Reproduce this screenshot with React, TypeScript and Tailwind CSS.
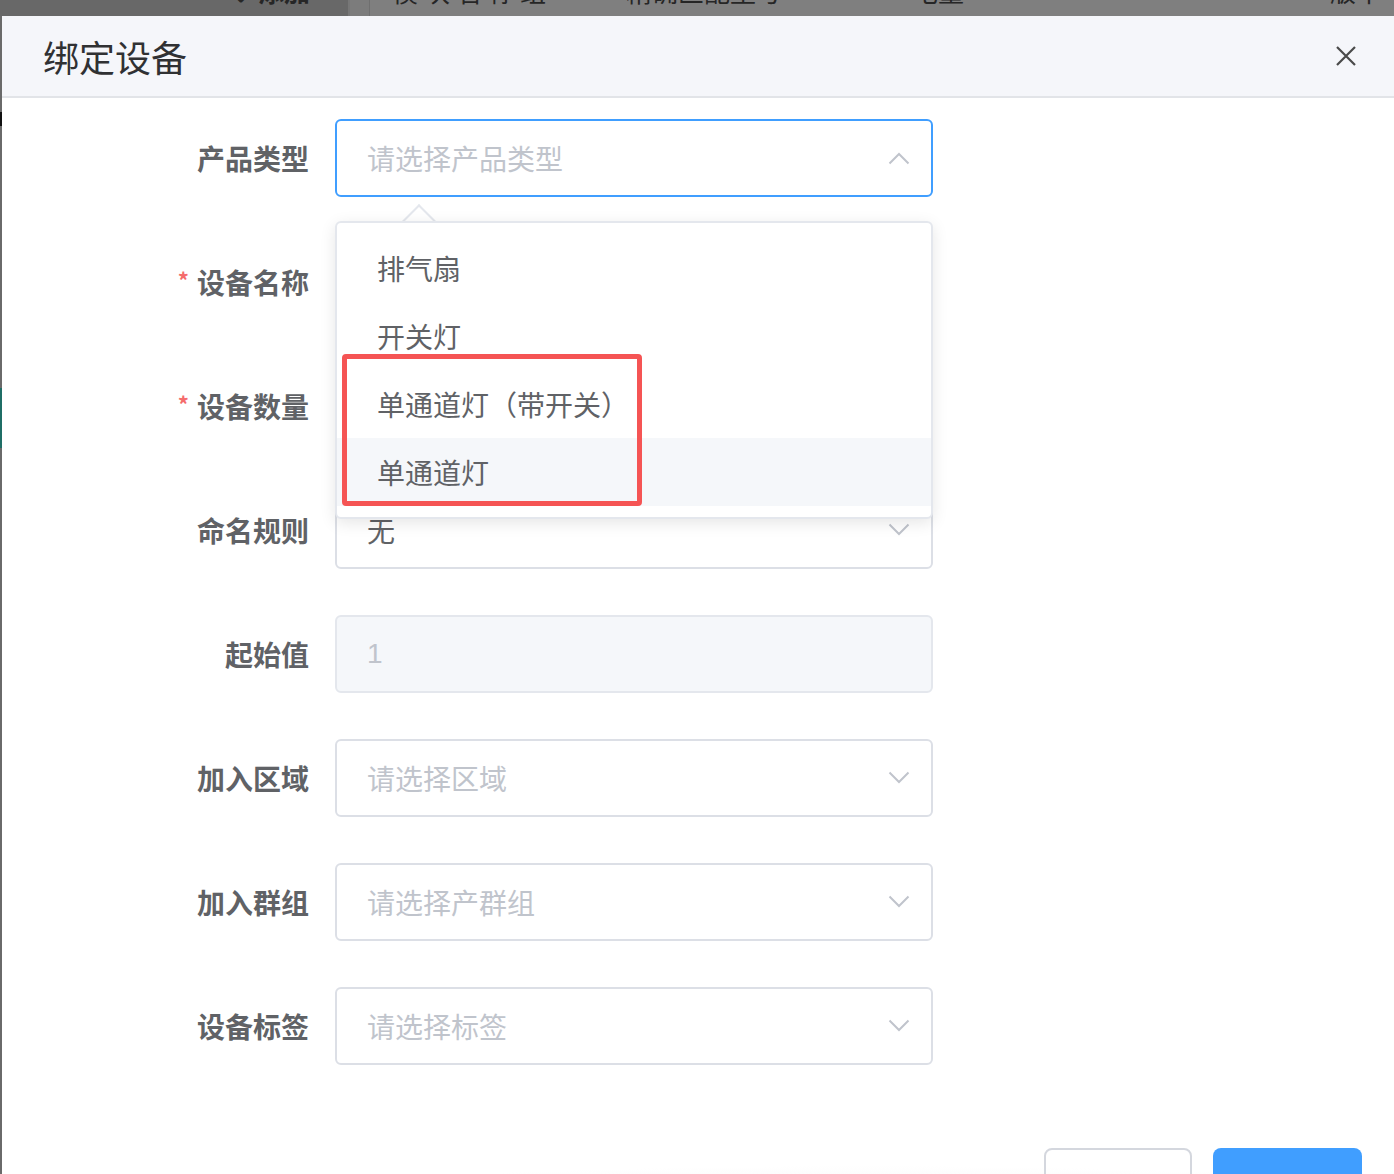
import React from 'react'

const Chevron = ({ up }: { up?: boolean }) => (
    <svg width="22" height="14" viewBox="0 0 22 14" className="shrink-0">
        <polyline
            points={up ? '1.5,12.5 11,3 20.5,12.5' : '1.5,1.5 11,11 20.5,1.5'}
            fill="none"
            stroke="#c0c4cc"
            strokeWidth="2"
        />
    </svg>
)

const rows = [
    { label: '产品类型', placeholder: '请选择产品类型', focus: true },
    { label: '设备名称', required: true, placeholder: '' },
    { label: '设备数量', required: true, placeholder: '' },
    { label: '命名规则', value: '无' },
    { label: '起始值', value: '1', disabled: true },
    { label: '加入区域', placeholder: '请选择区域' },
    { label: '加入群组', placeholder: '请选择产群组' },
    { label: '设备标签', placeholder: '请选择标签' },
]

const options = ['排气扇', '开关灯', '单通道灯（带开关）', '单通道灯']

const App = () => {
    return (
        <div className="w-[1394px] h-[1174px] overflow-hidden flex flex-col bg-[#6a6a6a] font-['Noto_Sans_CJK_SC','Noto_Sans',sans-serif]">
            {/* masked page behind the dialog */}
            <div className="h-[16px] shrink-0 flex text-[26px] leading-[30px] text-[#262626]">
                <div className="w-[348px] bg-[#686868] relative overflow-hidden">
                    <span className="absolute left-[230px] top-[-24px] font-semibold">⌄ 添加</span>
                </div>
                <div className="w-[2px] bg-[#777]" />
                <div className="w-[19px] bg-[#7c7c7c]" />
                <div className="w-[1px] bg-[#6f6f6f]" />
                <div className="flex-1 bg-[#7f7f7f] relative overflow-hidden">
                    <span className="absolute left-[22px] top-[-24px] tracking-[6px]">模块名称</span>
                    <span className="absolute left-[150px] top-[-24px]">组</span>
                    <span className="absolute left-[256px] top-[-24px]">精确匹配型号</span>
                    <span className="absolute left-[542px] top-[-24px]">电量</span>
                    <span className="absolute left-[960px] top-[-24px]">版本</span>
                </div>
            </div>

            <div className="flex flex-1">
                <div className="w-[2px] flex flex-col bg-[#6a6a6a]">
                    <div className="h-[96px]" />
                    <div className="h-[14px] bg-[#111]" />
                    <div className="h-[262px]" />
                    <div className="h-[60px] bg-[#1f6e66]" />
                </div>

                <div className="flex-1 bg-white flex flex-col">
                    <div className="h-[82px] bg-[#f5f6fa] flex items-center justify-between pl-[41px] pr-[38px] border-b-2 border-[#e2e4e8]">
                        <span className="text-[36px] text-[#303133] leading-none">绑定设备</span>
                        <svg width="20" height="20" viewBox="0 0 20 20">
                            <path d="M1 1 L19 19 M19 1 L1 19" stroke="#4a4a4a" strokeWidth="2.2" fill="none" />
                        </svg>
                    </div>

                    <div className="relative pt-[21px] flex flex-col gap-[46px]">
                        {rows.map((r) => (
                            <div key={r.label} className="flex items-center h-[78px]">
                                <div className="w-[307px] text-right text-[28px] font-bold text-[#606266] leading-none">
                                    {r.required && <span className="text-[#f56c6c] text-[22px] mr-[8px] align-top">*</span>}
                                    {r.label}
                                </div>
                                <div
                                    className={
                                        r.focus
                                            ? 'ml-[26px] w-[598px] h-[78px] rounded-[6px] border-2 border-[#409eff] flex items-center justify-between pl-[30px] pr-[21px]'
                                            : r.disabled
                                            ? 'ml-[26px] w-[598px] h-[78px] rounded-[6px] border-2 border-[#e4e7ed] bg-[#f5f7fa] flex items-center justify-between pl-[30px] pr-[21px]'
                                            : 'ml-[26px] w-[598px] h-[78px] rounded-[6px] border-2 border-[#dcdfe6] flex items-center justify-between pl-[30px] pr-[21px]'
                                    }
                                >
                                    {r.value ? (
                                        <span
                                            className={
                                                r.disabled
                                                    ? "text-[28px] text-[#c0c4cc] font-['Liberation_Sans',sans-serif] font-light"
                                                    : 'text-[28px] text-[#606266]'
                                            }
                                        >
                                            {r.value}
                                        </span>
                                    ) : (
                                        <span className="text-[28px] text-[#c0c4cc]">{r.placeholder}</span>
                                    )}
                                    {!r.disabled && r.label !== '设备名称' && r.label !== '设备数量' && <Chevron up={r.focus} />}
                                </div>
                            </div>
                        ))}

                        {/* dropdown popper */}
                        <div className="absolute left-[333px] top-[123px] w-[598px]">
                            <div className="absolute left-[72px] top-[-12px] w-[24px] h-[24px] rotate-45 bg-white border-l-2 border-t-2 border-[#e4e7ed]" />
                            <div className="relative bg-white border-2 border-[#e4e7ed] rounded-[6px] shadow-[0_4px_16px_rgba(0,0,0,0.1)] py-[11px]">
                                {options.map((o, i) => (
                                    <div
                                        key={o}
                                        className={
                                            i === 3
                                                ? 'h-[68px] flex items-center pl-[40px] text-[28px] text-[#606266] bg-[#f5f7fa]'
                                                : 'h-[68px] flex items-center pl-[40px] text-[28px] text-[#606266]'
                                        }
                                    >
                                        {o}
                                    </div>
                                ))}
                            </div>
                            {/* annotation box */}
                            <div className="absolute left-[7px] top-[133px] w-[300px] h-[152px] border-[5px] border-[#f55454] rounded-[4px]" />
                        </div>
                    </div>

                    <div className="flex-1 mt-[25px] bg-[radial-gradient(ellipse_95%_100%_at_62%_135%,#dedede_0%,#efefef_45%,#ffffff_80%)] flex justify-end items-start gap-[21px] pr-[32px] pt-[58px]">
                        <button className="w-[148px] h-[80px] rounded-[8px] border-2 border-[#d4d7de] bg-transparent text-[28px] text-[#606266]">取消</button>
                        <button className="w-[149px] h-[80px] rounded-[8px] bg-[#409eff] text-[28px] text-white">确定</button>
                    </div>
                </div>
            </div>
        </div>
    )
}

export default App
